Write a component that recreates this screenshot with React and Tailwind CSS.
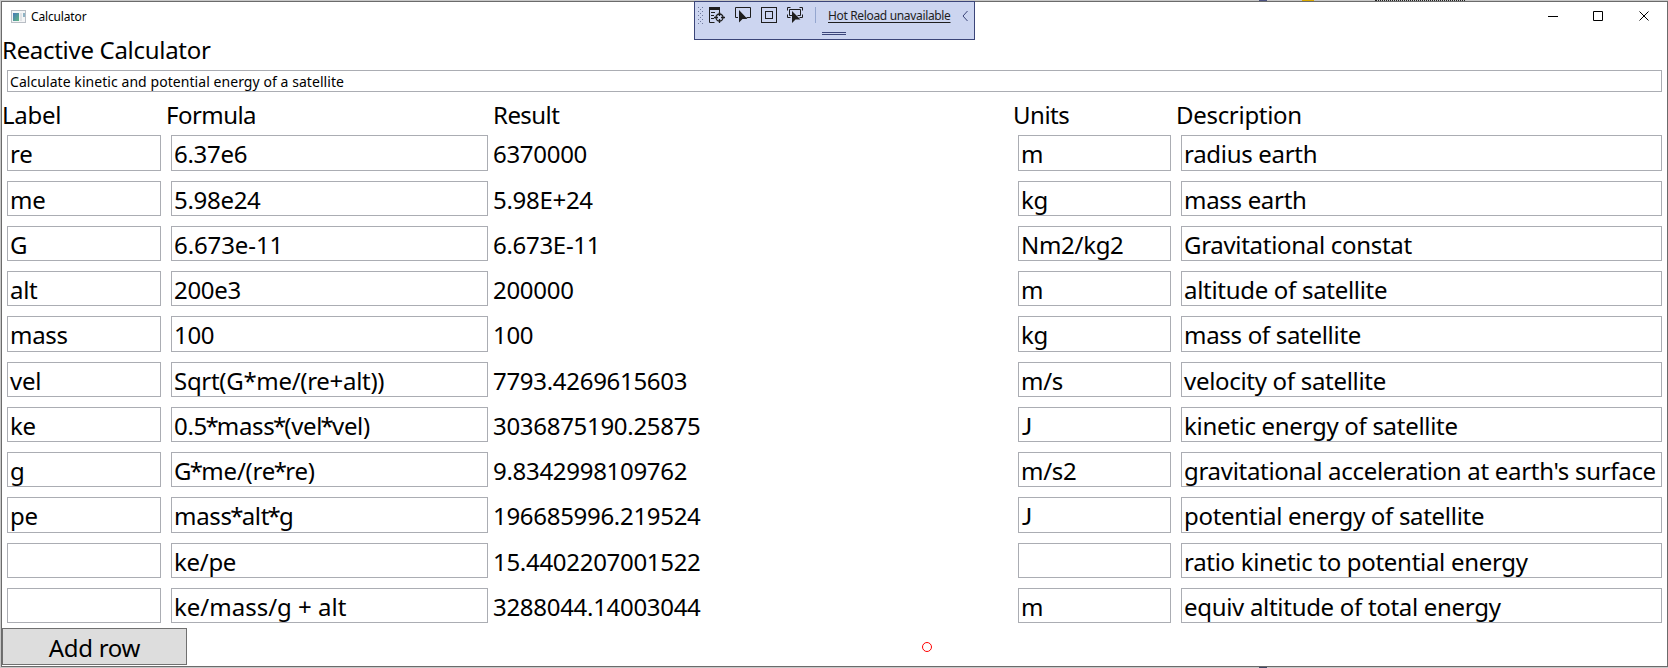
const rows = [
  ["re", "6.37e6", "6370000", "m", "radius earth", "h-[46px] pb-px", ""],
  ["me", "5.98e24", "5.98E+24", "kg", "mass earth", "h-[45px]", ""],
  ["G", "6.673e-11", "6.673E-11", "Nm2/kg2", "Gravitational constat", "h-[45px]", "tracking-[-0.1px]"],
  ["alt", "200e3", "200000", "m", "altitude of satellite", "h-[45px]", ""],
  ["mass", "100", "100", "kg", "mass of satellite", "h-[46px]", ""],
  ["vel", "Sqrt(G*me/(re+alt))", "7793.4269615603", "m/s", "velocity of satellite", "h-[45px]", ""],
  ["ke", "0.5*mass*(vel*vel)", "3036875190.25875", "J", "kinetic energy of satellite", "h-[45px]", "tracking-[-0.33px]"],
  ["g", "G*me/(re*re)", "9.8342998109762", "m/s2", "gravitational acceleration at earth's surface", "h-[45px]", "tracking-[-0.2px]"],
  ["pe", "mass*alt*g", "196685996.219524", "J", "potential energy of satellite", "h-[46px]", ""],
  ["", "ke/pe", "15.4402207001522", "", "ratio kinetic to potential energy", "h-[45px]", ""],
  ["", "ke/mass/g + alt", "3288044.14003044", "m", "equiv altitude of total energy", "h-[45px]", "tracking-[0px]"],
];

const columns = "grid grid-cols-[164px_327px_520px_163px_491px]";

function Cell({ children, height }) {
  return (
    <div className="flex p-[5px]">
      <div className="flex flex-1 items-start border border-[#abadb3] pl-[2px] pt-[6px] leading-6">
        {children}
      </div>
    </div>
  );
}

function Formula({ text, tracking }) {
  return (
    <span className={`whitespace-pre ${tracking || "tracking-[-0.3px]"}`}>
      {text.split("*").map((part, i) => (
        <span key={i}>
          {i > 0 && <span className={text.startsWith("Sqrt") ? "" : "-mx-[1.500px]"}>*</span>}
          {part}
        </span>
      ))}
    </span>
  );
}

function AppIcon() {
  return (
    <svg width="16" height="14" viewBox="0 0 16 14" shapeRendering="crispEdges">
      <defs>
        <linearGradient id="pane" x1="0" y1="0" x2="1" y2="1">
          <stop offset="0" stopColor="#4678b8" />
          <stop offset="1" stopColor="#62b883" />
        </linearGradient>
      </defs>
      <rect x="1.5" y="0.5" width="14" height="12" fill="#f4f5f6" stroke="#b9bec5" />
      <rect x="3" y="3" width="6" height="8" fill="url(#pane)" />
      <rect x="10" y="3" width="2" height="8" fill="#e1e3e6" />
      <rect x="13" y="3" width="2" height="4" fill="#8fb3c4" />
    </svg>
  );
}

function Toolbar() {
  return (
    <div className="absolute left-[694px] top-[1px] flex h-[39px] w-[281px] flex-col border border-[#3b4579] bg-[#ccd5f0]">
      <svg width="279" height="37" viewBox="695 2 279 37" className="absolute left-0 top-0" fill="none" stroke="#1e1e1e">
        <g stroke="none" fill="#6f7a9f">
          {[7, 11, 15, 19, 23].map((y) => (
            <g key={y}>
              <rect x="698" y={y} width="1" height="1" />
              <rect x="702" y={y} width="1" height="1" />
              {y < 23 && <rect x="700" y={y + 2} width="1" height="1" />}
            </g>
          ))}
        </g>
        <path d="M709 8.500h11" strokeWidth="3" />
        <path d="M709.500 8v14.500h5M719.500 9v3M711 12.500h4M711 15.500h3M711 18.500h3" />
        <circle cx="719.500" cy="17.500" r="3.500" strokeWidth="1.300" />
        <path d="M719.500 12v4M719.500 19v4M714 17.500h4M721 17.500h4" strokeWidth="1.300" />
        <path d="M738 17.500h-2.500v-10h15v10h-4" />
        <path d="M739 10v12.500l3.500-3.500h5z" fill="#1e1e1e" stroke="none" />
        <rect x="761.500" y="7.500" width="15" height="15" />
        <rect x="765.500" y="11.500" width="7" height="7" />
        <path d="M787.500 10.500v-3h3M799.500 7.500h3v3M787.500 14.500v3h3M802.500 14.500v3h-3" />
        <path d="M792 15.500h-2.500v-6h11v6h-3" />
        <path d="M792 11v12l3.500-3.500h5z" fill="#1e1e1e" stroke="none" />
        <path d="M815.500 7v16" stroke="#94a6cf" />
        <path d="M967.500 11l-4.500 5 4.500 5" stroke="#3b4579" />
        <path d="M822 32.500h24M822 34.500h24" stroke="#3b4579" />
      </svg>
      <span className="ml-[133px] mt-[6px] self-start whitespace-nowrap text-[12px] leading-4 tracking-[-0.34px] text-[#1e1e1e] underline underline-offset-2">
        Hot Reload unavailable
      </span>
    </div>
  );
}

export default function App() {
  return (
    <div className="relative h-[668px] w-[1668px] overflow-hidden bg-[#c8c8c8] pl-px pt-px font-['Noto_Sans','Open_Sans',sans-serif] text-[24px] tracking-[-0.3px] text-black">
      <div className="absolute left-[1259px] top-0 h-px w-2 bg-[#4b5180]" />
      <div className="absolute left-[1302px] top-0 h-px w-3 bg-[#d9a900]" />
      <div className="absolute left-[1375px] top-0 h-px w-[90px] border-t border-dotted border-[#222222]" />
      <div className="absolute bottom-0 left-[1259px] h-px w-2 bg-[#3f4763]" />
      <div className="flex h-[666px] w-[1667px] flex-col border border-[#6b6b6b] bg-white">
        <header className="flex h-[29px] items-center pl-2">
          <AppIcon />
          <span className="ml-[5px] flex-1 text-[12px] leading-4 tracking-[-0.15px]">Calculator</span>
          <svg width="115" height="12" viewBox="0 0 115 12" className="mb-[2px] mr-[4px]" fill="none" stroke="#000">
            <path d="M0 6.500h10M45.500 1.500h9v9h-9z" />
            <path d="M91.500 1.500l9 9M100.500 1.500l-9 9" />
          </svg>
        </header>
        <h1 className="h-[34px] leading-[38px]">Reactive Calculator</h1>
        <div className="mx-[5px] mb-[7px] mt-[5px] flex h-[22px] items-center border border-[#abadb3] pl-[2px] text-[14px] tracking-[0.06px]">
          Calculate kinetic and potential energy of a satellite
        </div>
        <div className={`${columns} h-[31px] leading-[32px]`}>
          <span>Label</span>
          <span className="tracking-[-0.55px]">Formula</span>
          <span className="tracking-[-0.55px]">Result</span>
          <span className="tracking-[-0.5px]">Units</span>
          <span>Description</span>
        </div>
        {rows.map(([label, formula, result, units, description, height, tracking]) => (
          <div key={result} className={`${columns} ${height.split(" ")[0]} whitespace-nowrap`}>
            <Cell>{label}</Cell>
            <Cell>
              <Formula text={formula} tracking={tracking} />
            </Cell>
            <span className="pt-[12px] leading-6">{result}</span>
            <Cell>
              {units === "J" ? <span className="font-['Lato'] pl-px">J</span> : units}
            </Cell>
            <Cell>{description}</Cell>
          </div>
        ))}
        <button className="flex h-[37px] w-[185px] items-center justify-center border border-[#707070] bg-[#dddddd] pt-[3px] leading-none">
          Add row
        </button>
      </div>
      <Toolbar />
      <div className="absolute left-[922px] top-[642px] size-[10px] rounded-full border border-[#ff0000]" />
    </div>
  );
}
